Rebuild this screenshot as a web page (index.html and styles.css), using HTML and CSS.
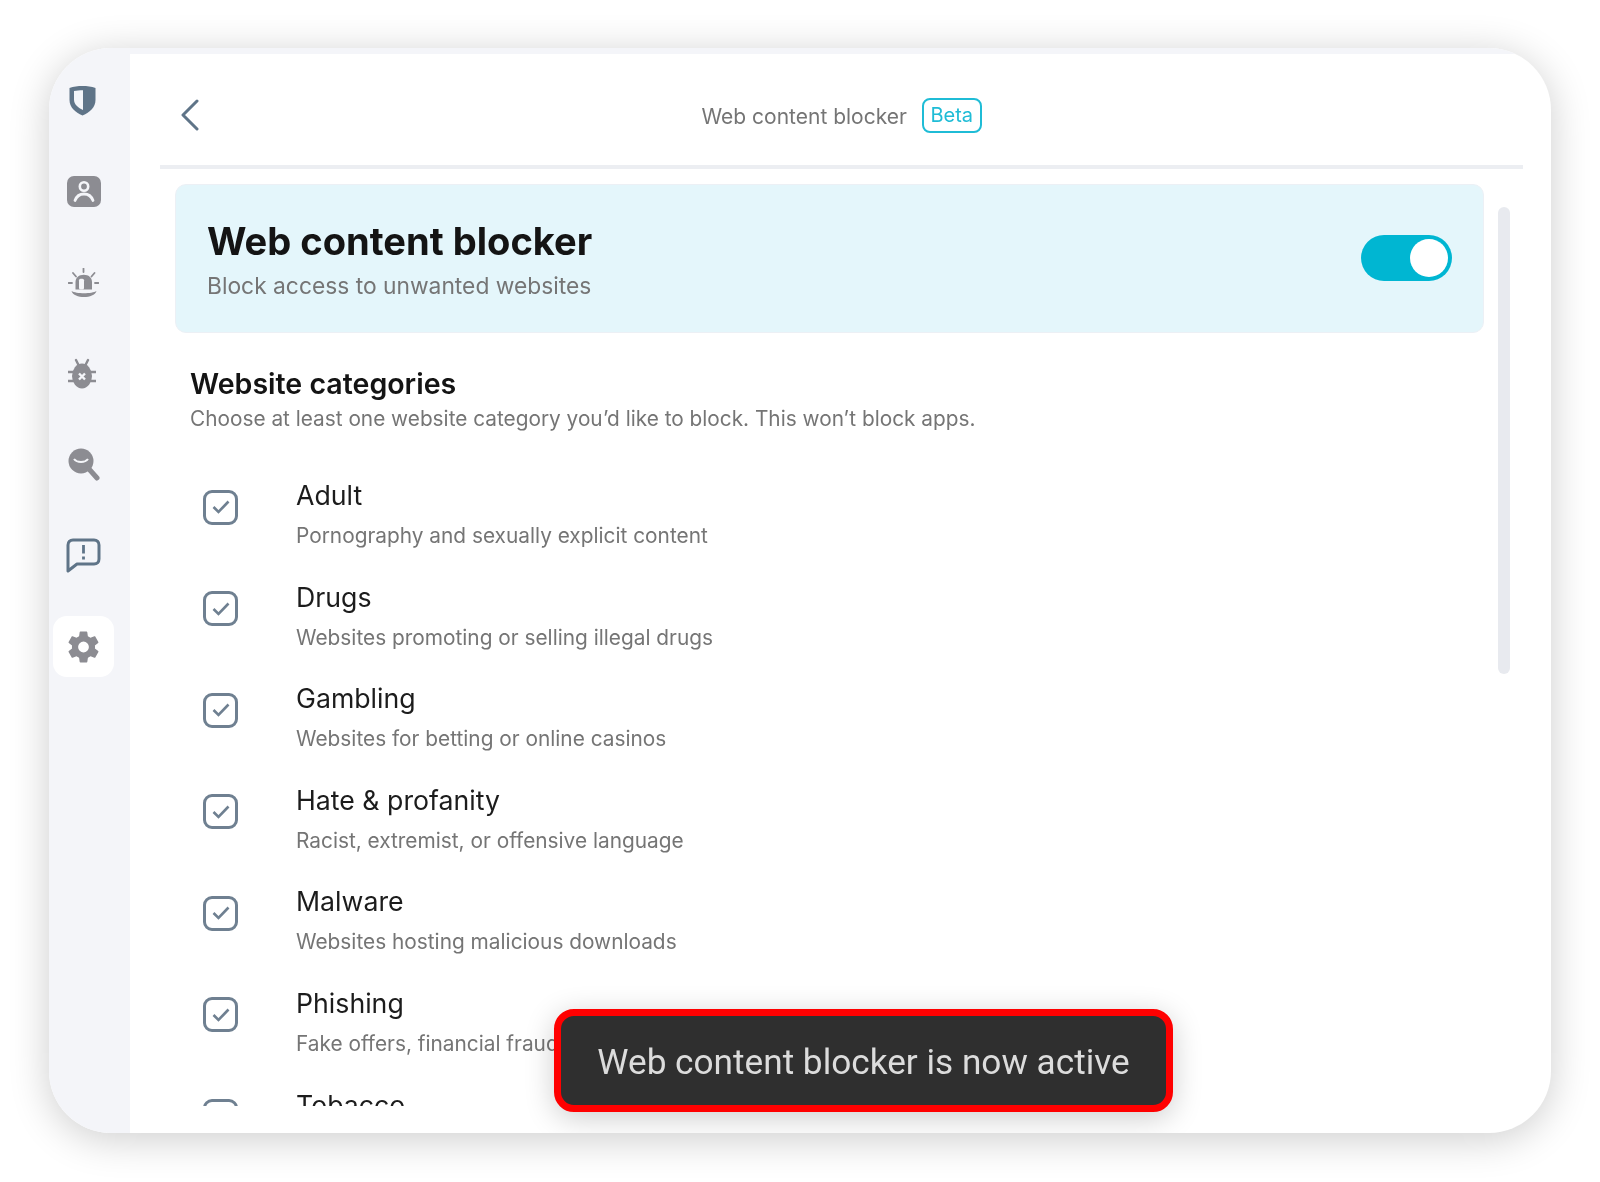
FILE: index.html
```html
<!DOCTYPE html>
<html lang="en">
<head>
    <meta charset="UTF-8">
    <meta name="viewport" content="width=device-width, initial-scale=1.0">
    <title>Web content blocker</title>
    <link rel="stylesheet" href="styles.css">
</head>
<body>
    <div class="window">
        <nav class="sidebar">
            <div class="nav-item">
                <svg class="nudge" width="27" height="31" viewBox="0 0 27 31"><path d="M0.5 3 C4.5 1.5 9 1 13.5 1 C18 1 22.5 1.5 26.5 3 V15 C26.5 22 21 27.5 13.5 30.5 C6 27.5 0.5 22 0.5 15 Z" fill="#5f7488"/><path d="M5 6 C7.5 5.5 10.5 5.2 14 5.2 V25 C8.5 22.5 5 19 5 14.5 Z" fill="#f4f5f9"/></svg>
            </div>
            <div class="nav-item">
                <svg width="34" height="31" viewBox="0 0 34 31"><rect width="34" height="31" rx="7" fill="#8c8c92"/><circle cx="17" cy="10.5" r="4.2" fill="none" stroke="#f4f5f9" stroke-width="2.6"/><path d="M8 24.5 C10 19 13 18 17 18 C21 18 24 19 26 24.5" fill="none" stroke="#f4f5f9" stroke-width="2.8" stroke-linecap="round"/></svg>
            </div>
            <div class="nav-item">
                <svg width="31" height="30" viewBox="0 0 31 30"><path d="M7.5 21.5 V14 C7.5 9.5 11 6.7 15.8 6.7 C20.5 6.7 24 9.5 24 14 V21.5 Z" fill="#8c8c92"/><rect x="11" y="10.7" width="5" height="10.8" rx="1.5" fill="#f4f5f9"/><path d="M15.5 0.5 V4 M5 5 L8 8.5 M26.5 5 L23.5 8.5 M0.5 15 H4 M27 15 H30.5" stroke="#8c8c92" stroke-width="1.8" stroke-linecap="round"/><path d="M3.5 23 C6 31 26 31 28.5 23 C24 26 8 26 3.5 23 Z" fill="#8c8c92"/></svg>
            </div>
            <div class="nav-item">
                <svg class="nudge" width="28" height="32" viewBox="0 0 28 32"><ellipse cx="14" cy="18" rx="10" ry="12.5" fill="#8c8c92"/><path d="M8 2 L10.5 7 M20 2 L17.5 7 M0.5 14 H5 M27.5 14 H23 M0.5 23 H5 M27.5 23 H23" stroke="#8c8c92" stroke-width="2.4" stroke-linecap="round"/><path d="M11 15.5 L17 21.5 M17 15.5 L11 21.5" stroke="#f4f5f9" stroke-width="2.4"/></svg>
            </div>
            <div class="nav-item">
                <svg width="32" height="33" viewBox="0 0 32 33"><circle cx="13" cy="13" r="12.5" fill="#8c8c92"/><path d="M21 21 L29 30" stroke="#8c8c92" stroke-width="5" stroke-linecap="round"/><path d="M6 11 C9 15 17 15 20 11" fill="none" stroke="#f4f5f9" stroke-width="2"/></svg>
            </div>
            <div class="nav-item">
                <svg width="35" height="35" viewBox="0 0 35 35"><path d="M2 33 V7 C2 4 4 2 7 2 H28 C31 2 33 4 33 7 V21 C33 24 31 26 28 26 H11 Z" fill="none" stroke="#5f7488" stroke-width="3" stroke-linejoin="round"/><path d="M17.5 7 V15.5" stroke="#5f7488" stroke-width="2.8"/><path d="M17.5 18.5 V21.5" stroke="#5f7488" stroke-width="2.8"/></svg>
            </div>
            <div class="nav-item active">
                <svg width="37" height="38" viewBox="0 0 24 24"><path fill="#8c8c92" fill-rule="evenodd" d="M19.4 13c.04-.32.07-.66.07-1s-.03-.68-.07-1l2.1-1.65c.2-.15.25-.42.13-.64l-2-3.46c-.12-.22-.39-.3-.61-.22l-2.49 1c-.52-.4-1.08-.73-1.69-.98l-.38-2.65A.49.49 0 0 0 14 2h-4c-.25 0-.46.18-.49.42l-.38 2.65c-.61.25-1.17.59-1.69.98l-2.49-1c-.23-.09-.49 0-.61.22l-2 3.46c-.13.22-.07.49.12.64L4.57 11c-.04.32-.07.66-.07 1s.03.68.07 1l-2.11 1.65c-.19.15-.24.42-.12.64l2 3.46c.12.22.39.3.61.22l2.49-1c.52.4 1.08.73 1.69.98l.38 2.65c.03.24.24.42.49.42h4c.25 0 .46-.18.49-.42l.38-2.65c.61-.25 1.17-.59 1.69-.98l2.49 1c.23.09.49 0 .61-.22l2-3.46c.12-.22.07-.49-.12-.64L19.4 13zM12 15.5a3.5 3.5 0 1 1 0-7 3.5 3.5 0 0 1 0 7z"/></svg>
            </div>
        </nav>

        <main class="main">
            <header class="topbar">
                <svg class="back" width="20" height="32" viewBox="0 0 20 32"><path d="M17 2 L3 16 L17 30" fill="none" stroke="#5f7488" stroke-width="3" stroke-linecap="round" stroke-linejoin="round"/></svg>
                <div class="topbar-title">
                    <span>Web content blocker</span>
                    <span class="beta">Beta</span>
                </div>
            </header>

            <div class="body">
                <div class="content">
                    <section class="banner">
                        <div class="banner-text">
                            <h1>Web content blocker</h1>
                            <p>Block access to unwanted websites</p>
                        </div>
                        <div class="toggle"><span class="knob"></span></div>
                    </section>

                    <h2>Website categories</h2>
                    <p class="intro">Choose at least one website category you’d like to block. This won’t block apps.</p>

                    <ul class="categories">
                        <li>
                            <span class="check"><svg width="18" height="14" viewBox="0 0 18 14"><path d="M1.5 7 L6.5 12 L16.5 1.5" fill="none" stroke="#6f8091" stroke-width="2.6"/></svg></span>
                            <div><div class="cat-name">Adult</div><div class="cat-desc">Pornography and sexually explicit content</div></div>
                        </li>
                        <li>
                            <span class="check"><svg width="18" height="14" viewBox="0 0 18 14"><path d="M1.5 7 L6.5 12 L16.5 1.5" fill="none" stroke="#6f8091" stroke-width="2.6"/></svg></span>
                            <div><div class="cat-name">Drugs</div><div class="cat-desc">Websites promoting or selling illegal drugs</div></div>
                        </li>
                        <li>
                            <span class="check"><svg width="18" height="14" viewBox="0 0 18 14"><path d="M1.5 7 L6.5 12 L16.5 1.5" fill="none" stroke="#6f8091" stroke-width="2.6"/></svg></span>
                            <div><div class="cat-name">Gambling</div><div class="cat-desc">Websites for betting or online casinos</div></div>
                        </li>
                        <li>
                            <span class="check"><svg width="18" height="14" viewBox="0 0 18 14"><path d="M1.5 7 L6.5 12 L16.5 1.5" fill="none" stroke="#6f8091" stroke-width="2.6"/></svg></span>
                            <div><div class="cat-name">Hate &amp; profanity</div><div class="cat-desc">Racist, extremist, or offensive language</div></div>
                        </li>
                        <li>
                            <span class="check"><svg width="18" height="14" viewBox="0 0 18 14"><path d="M1.5 7 L6.5 12 L16.5 1.5" fill="none" stroke="#6f8091" stroke-width="2.6"/></svg></span>
                            <div><div class="cat-name">Malware</div><div class="cat-desc">Websites hosting malicious downloads</div></div>
                        </li>
                        <li>
                            <span class="check"><svg width="18" height="14" viewBox="0 0 18 14"><path d="M1.5 7 L6.5 12 L16.5 1.5" fill="none" stroke="#6f8091" stroke-width="2.6"/></svg></span>
                            <div><div class="cat-name">Phishing</div><div class="cat-desc">Fake offers, financial fraud</div></div>
                        </li>
                        <li>
                            <span class="check"><svg width="18" height="14" viewBox="0 0 18 14"><path d="M1.5 7 L6.5 12 L16.5 1.5" fill="none" stroke="#6f8091" stroke-width="2.6"/></svg></span>
                            <div><div class="cat-name">Tobacco</div></div>
                        </li>
                    </ul>
                </div>
                <div class="scrollbar"></div>
            </div>
        </main>

        <div class="toast">Web content blocker is now active</div>
    </div>
</body>
</html>
```

FILE: styles.css
```css
* {
  box-sizing: border-box;
}

body {
  margin: 0;
  padding: 48px 49px 49px;
  background: #fff;
  font-family: Inter, "Liberation Sans", sans-serif;
}

.window {
  position: relative;
  display: flex;
  height: 1085px;
  background: #fff;
  border-radius: 62px;
  overflow: hidden;
  box-shadow: 0 6px 40px rgba(0, 0, 0, 0.2);
  filter: blur(0.45px);
}

.sidebar {
  flex: 0 0 81px;
  display: flex;
  flex-direction: column;
  gap: 30px;
  padding: 22px 0 0 4px;
  background: #f4f5f9;
}

.nav-item {
  width: 61px;
  height: 61px;
  display: flex;
  align-items: center;
  justify-content: center;
}

.nav-item .nudge {
  margin-right: 3px;
}

.nav-item.active {
  background: #fff;
  border-radius: 14px;
}

.main {
  flex: 1;
  min-width: 0;
  display: flex;
  flex-direction: column;
  border-top: 6px solid #f4f5f9;
}

/* Header */
.topbar {
  flex: 0 0 115px;
  display: grid;
  grid-template-columns: 1fr auto 1fr;
  align-items: center;
  margin: 0 28px 0 30px;
  padding-top: 13px;
  border-bottom: 4px solid #eceef2;
}

.back {
  margin: -2px 0 0 20px;
}

.topbar-title {
  display: flex;
  align-items: center;
  gap: 15px;
  font-size: 21px;
  color: #757575;
}

.beta {
  margin-bottom: 2px;
  padding: 3.5px 6.5px;
  font-size: 20px;
  line-height: 24px;
  color: #1fbcd6;
  border: 2px solid #1fbcd6;
  border-radius: 8px;
}

/* Body */
.body {
  flex: 1;
  min-height: 0;
  display: flex;
  margin-bottom: 27px;
  padding: 15px 41px 0 45px;
}

.content {
  flex: 1;
  min-width: 0;
  overflow: hidden;
}

.scrollbar {
  flex: 0 0 12px;
  height: 467px;
  margin: 23px 0 0 14px;
  background: #e8eaef;
  border-radius: 6px;
}

.banner {
  height: 149px;
  display: flex;
  align-items: center;
  justify-content: space-between;
  padding: 0 31px;
  background: #e4f6fb;
  border: 1px solid #ecf0f5;
  border-radius: 11px;
}

.banner-text {
  padding-top: 2px;
}

.banner h1 {
  margin: 0 0 7px;
  font-size: 38.1px;
  line-height: 46px;
  font-weight: 700;
  color: #141414;
}

.banner p {
  margin: 0;
  font-size: 22.8px;
  line-height: 30px;
  color: #757575;
}

.toggle {
  width: 91px;
  height: 46px;
  margin-bottom: 2px;
  display: flex;
  justify-content: flex-end;
  align-items: center;
  padding-right: 4px;
  background: #00b6d2;
  border-radius: 23px;
}

.knob {
  width: 38px;
  height: 38px;
  background: #fff;
  border-radius: 50%;
}

h2 {
  margin: 32px 0 0 15px;
  font-size: 28.55px;
  line-height: 38px;
  font-weight: 600;
  color: #141414;
}

.intro {
  margin: 1px 0 0 15px;
  font-size: 20.8px;
  line-height: 30px;
  color: #757575;
}

.categories {
  list-style: none;
  margin: 44px 0 0 15px;
  padding: 0;
}

.categories li {
  display: flex;
  height: 101.6px;
}

.check {
  flex: 0 0 35px;
  height: 35px;
  margin: 11.5px 58px 0 13px;
  display: flex;
  align-items: center;
  justify-content: center;
  border: 3.5px solid #6f8091;
  border-radius: 9px;
}

.cat-name {
  font-size: 26.7px;
  line-height: 34px;
  color: #1c1c1c;
}

.cat-desc {
  margin-top: 10px;
  font-size: 20.83px;
  line-height: 28px;
  color: #757575;
}

/* Toast */
.toast {
  position: absolute;
  left: 505px;
  top: 961px;
  width: 619px;
  height: 103px;
  padding-top: 2px;
  display: flex;
  align-items: center;
  justify-content: center;
  font-family: Roboto, "Liberation Sans", sans-serif;
  font-size: 35.2px;
  color: #dcdcdc;
  background: #2f2f2f;
  border: 7px solid #ff0000;
  border-radius: 20px;
  box-shadow: 0 6px 30px rgba(0, 0, 0, 0.2);
}
```
